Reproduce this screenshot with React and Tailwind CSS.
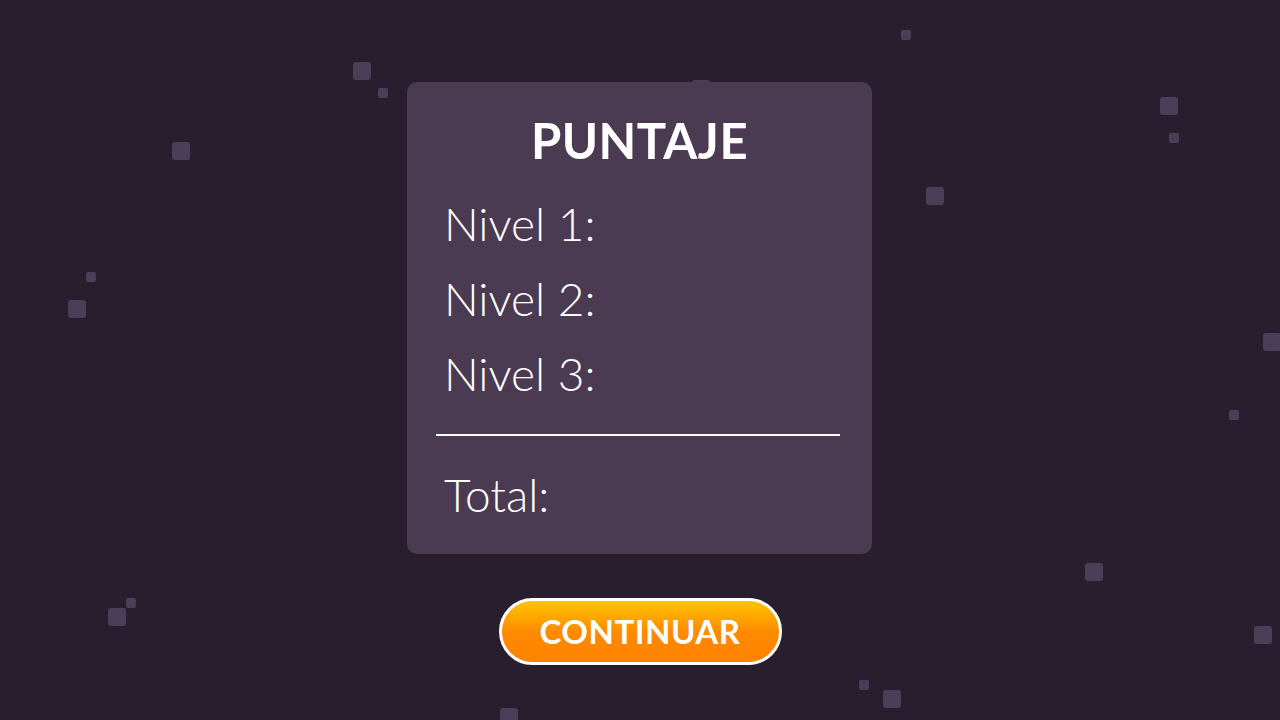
import React from "react";

const particles = [
  { x: 353, y: 62, big: true },
  { x: 378, y: 88 },
  { x: 172, y: 142, big: true },
  { x: 901, y: 30 },
  { x: 1160, y: 97, big: true },
  { x: 1169, y: 133 },
  { x: 926, y: 187, big: true },
  { x: 86, y: 272 },
  { x: 68, y: 300, big: true },
  { x: 1263, y: 333, big: true },
  { x: 1229, y: 410 },
  { x: 1085, y: 563, big: true },
  { x: 108, y: 608, big: true },
  { x: 126, y: 598 },
  { x: 1254, y: 626, big: true },
  { x: 859, y: 680 },
  { x: 883, y: 690, big: true },
  { x: 500, y: 708, big: true },
  { x: 692, y: 80, big: true },
];

const levels = ["Nivel 1:", "Nivel 2:", "Nivel 3:"];

const App = () => {
  return (
    <div
      className="relative w-full h-[720px] overflow-hidden bg-[#291e2e] flex flex-col items-center"
      style={{ fontFamily: "Lato, 'Open Sans', sans-serif" }}
    >
      {/* background particles */}
      {particles.map((p, i) => (
        <div
          key={i}
          className={`absolute bg-[#4b3e58] ${p.big ? "w-[18px] h-[18px] rounded-[3px]" : "w-[10px] h-[10px] rounded-[2px]"}`}
          style={{ left: p.x, top: p.y }}
        />
      ))}

      {/* Score card */}
      <div className="relative mt-[82px] mr-[1px] w-[465px] h-[472px] bg-[#4a3b52] rounded-[10px] flex flex-col">
        <h1 className="mt-[28px] text-center text-white font-bold text-[49px] leading-[60px] tracking-[0.5px]">
          PUNTAJE
        </h1>
        <div className="mt-[16px] pl-[37px] flex flex-col">
          {levels.map((l) => (
            <p key={l} className="text-white font-light text-[46px] leading-[75px]">
              {l}
            </p>
          ))}
        </div>
        <div className="mt-[23px] ml-[29px] mr-[32px] h-[2px] bg-white" />
        <p className="mt-[21px] pl-[37px] text-white font-light text-[46px] leading-[75px]">
          Total:
        </p>
      </div>

      {/* Continue button */}
      <button className="relative mt-[44px] w-[283px] h-[67px] rounded-full border-[3px] border-white bg-gradient-to-b from-[#ffc400] via-[#ff8a00] to-[#ff8200] text-white font-bold text-[33px] leading-none tracking-[0.5px]">
        CONTINUAR
      </button>
    </div>
  );
};

export default App;
